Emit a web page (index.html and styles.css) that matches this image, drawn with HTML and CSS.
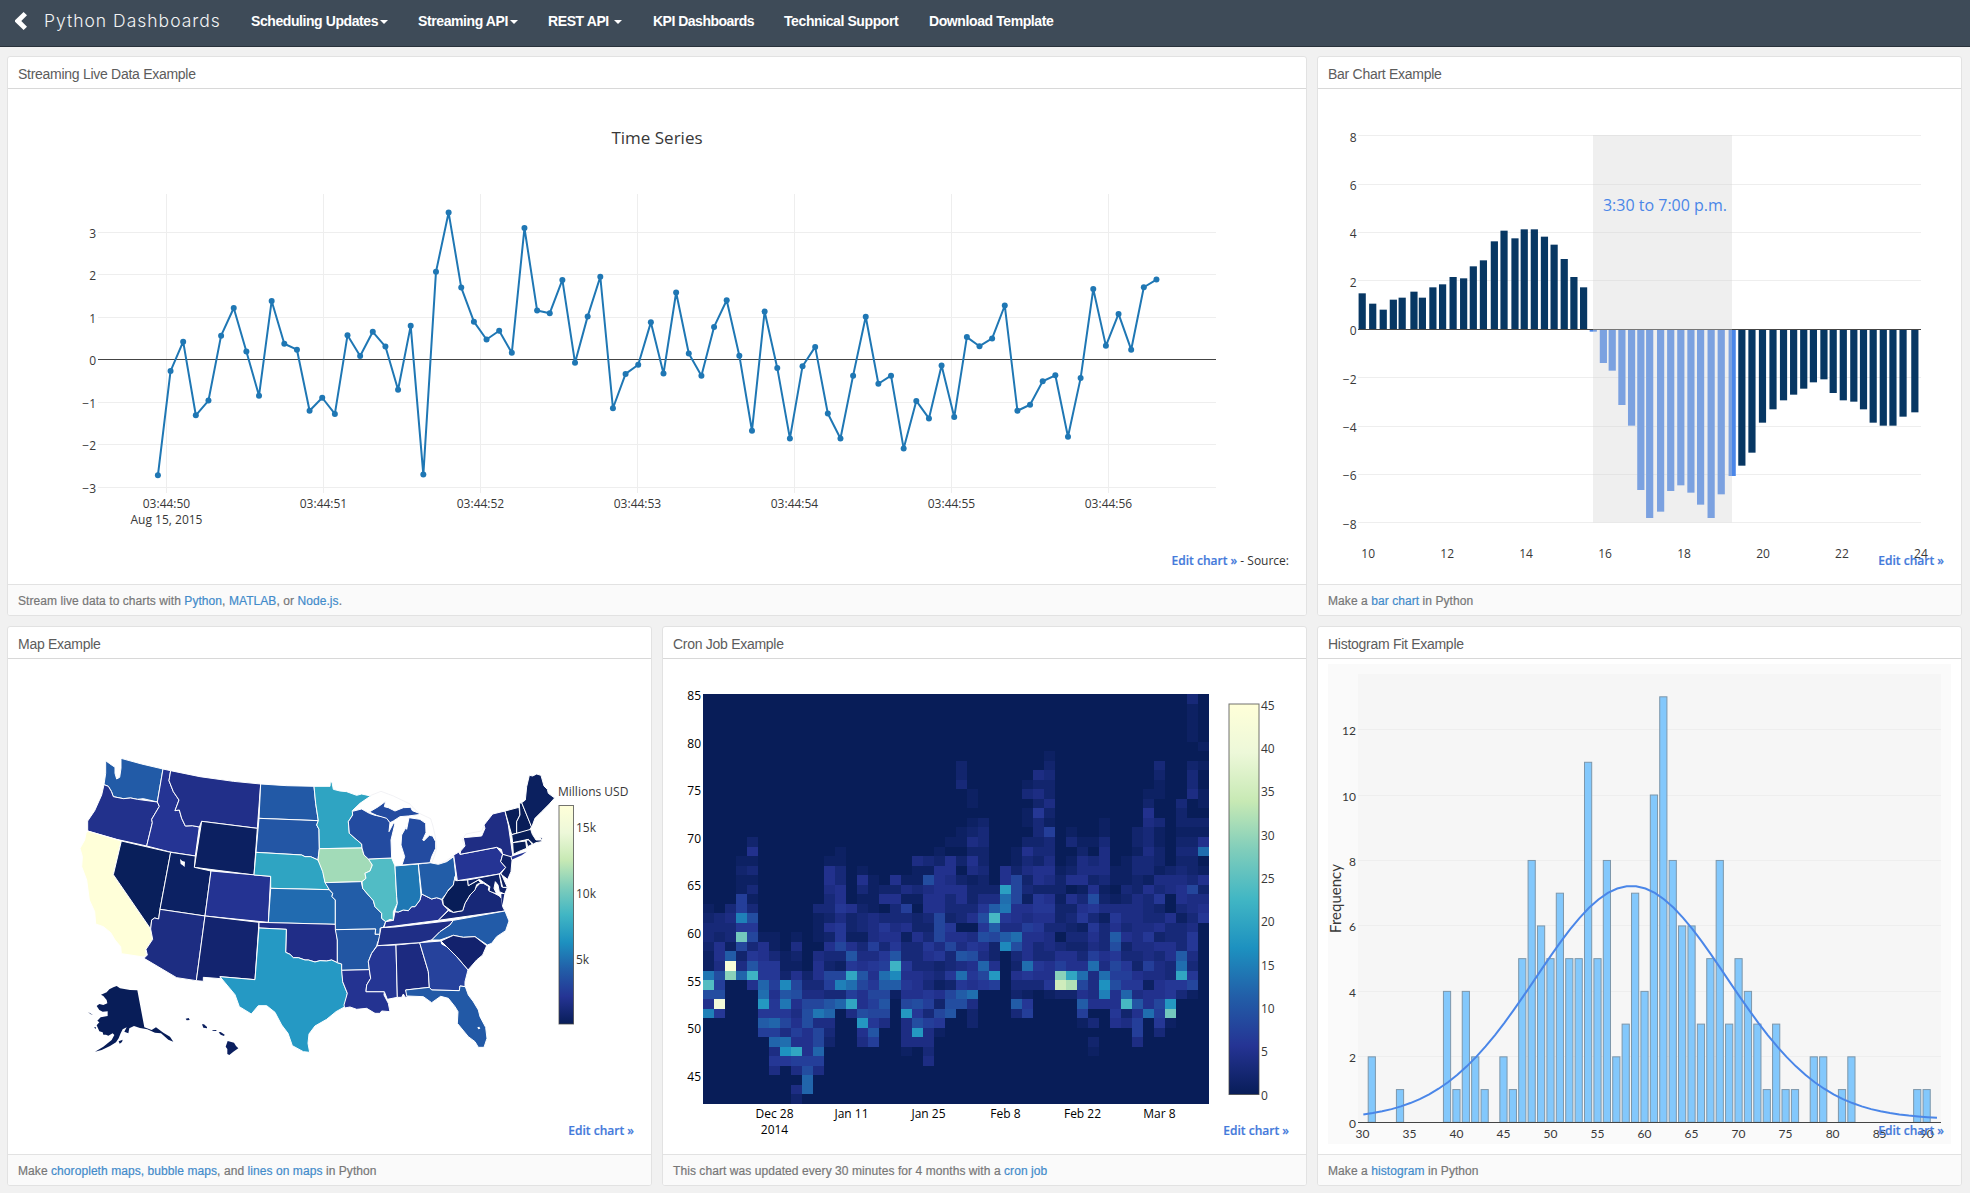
FILE: index.html
```html
<!DOCTYPE html>
<html lang="en">
<head>
<meta charset="utf-8">
<title>Python Dashboards</title>
<link rel="stylesheet" href="styles.css">
</head>
<body>
<header class="navbar">
  <a class="brand" href="#">
    <svg class="chevron" viewBox="0 0 12 18"><path d="M8.6 0 L12 3.3 L6.3 9 L12 14.7 L8.6 18 L0 9.7 V8.3 Z"/></svg>
    <span class="brand-name">Python Dashboards</span>
  </a>
  <nav class="menu">
    <a class="menu-item w-scheduling" href="#">Scheduling Updates<i class="caret"></i></a>
    <a class="menu-item w-streaming" href="#">Streaming API<i class="caret"></i></a>
    <a class="menu-item w-rest" href="#">REST API <i class="caret"></i></a>
    <a class="menu-item w-kpi" href="#">KPI Dashboards</a>
    <a class="menu-item w-support" href="#">Technical Support</a>
    <a class="menu-item" href="#">Download Template</a>
  </nav>
</header>

<main class="grid">
  <section class="card wide">
    <h2 class="card-title">Streaming Live Data Example</h2>
    <div class="card-body">
      <svg class="chart" id="stream" viewBox="8 89 1298 495"></svg>
      <div class="edit"><a href="#">Edit chart »</a> - Source:</div>
    </div>
    <footer class="card-footer">Stream live data to charts with <a href="#">Python</a>, <a href="#">MATLAB</a>, or <a href="#">Node.js</a>.</footer>
  </section>

  <section class="card">
    <h2 class="card-title">Bar Chart Example</h2>
    <div class="card-body">
      <svg class="chart" id="bars" viewBox="1318 89 643 495"></svg>
      <div class="edit"><a href="#">Edit chart »</a></div>
    </div>
    <footer class="card-footer">Make a <a href="#">bar chart</a> in Python</footer>
  </section>

  <section class="card">
    <h2 class="card-title">Map Example</h2>
    <div class="card-body">
      <svg class="chart" id="map" viewBox="8 659 643 495"></svg>
      <div class="edit"><a href="#">Edit chart »</a></div>
    </div>
    <footer class="card-footer">Make <a href="#">choropleth maps,</a> <a href="#">bubble maps</a>, and <a href="#">lines on maps</a> in Python</footer>
  </section>

  <section class="card">
    <h2 class="card-title">Cron Job Example</h2>
    <div class="card-body">
      <svg class="chart" id="heat" viewBox="663 659 643 495"></svg>
      <div class="edit"><a href="#">Edit chart »</a></div>
    </div>
    <footer class="card-footer">This chart was updated every 30 minutes for 4 months with a <a href="#">cron job</a></footer>
  </section>

  <section class="card">
    <h2 class="card-title">Histogram Fit Example</h2>
    <div class="card-body">
      <svg class="chart" id="hist" viewBox="1318 659 643 495"></svg>
      <div class="edit"><a href="#">Edit chart »</a></div>
    </div>
    <footer class="card-footer">Make a <a href="#">histogram</a> in Python</footer>
  </section>
</main>
<script src="charts.js"></script>
</body>
</html>
```
FILE: styles.css
```css
* { box-sizing: border-box; }
body {
  margin: 0;
  background: #f1f1f1;
  font-family: "Liberation Sans", Arial, sans-serif;
  height: 1193px;
  overflow: hidden;
}
a { text-decoration: none; color: #428bca; }

.navbar {
  height: 47px;
  display: flex;
  align-items: center;
  padding: 0 0 5px 15px;
  background: #3e4b58;
  border-bottom: 1px solid #29323b;
}
.brand { display: flex; align-items: center; width: 236px; color: #f2f3f4; }
.chevron { width: 12px; height: 18px; fill: #fff; margin-right: 17px; }
.brand-name {
  font-family: Inter, "Liberation Sans", sans-serif;
  font-size: 17.5px;
  font-weight: 300;
  letter-spacing: 1px;
  white-space: nowrap;
}
.menu { display: flex; }
.menu-item {
  color: #fff;
  font-size: 14px;
  font-weight: bold;
  letter-spacing: -0.4px;
  white-space: nowrap;
}
.w-scheduling { width: 167px; letter-spacing: -0.42px; }
.w-streaming { width: 130px; }
.w-rest { width: 105px; }
.w-kpi { width: 131px; letter-spacing: -0.5px; }
.w-support { width: 145px; }
.caret {
  display: inline-block;
  margin-left: 2px;
  vertical-align: 2px;
  border: 4px solid transparent;
  border-top-color: #fff;
  border-bottom: 0;
}

.grid {
  display: grid;
  grid-template-columns: repeat(3, 645px);
  grid-auto-rows: 560px;
  gap: 10px;
  padding: 9px 7px;
}
.wide { grid-column: span 2; }
.card {
  display: flex;
  flex-direction: column;
  background: #fff;
  border: 1px solid #e2e2e2;
  border-radius: 3px;
  overflow: hidden;
}
.card-title {
  flex: none;
  margin: 0;
  height: 32px;
  padding-left: 10px;
  border-bottom: 1px solid #d8d8d8;
  color: #5c5c5c;
  font-size: 14px;
  font-weight: normal;
  letter-spacing: -0.28px;
  line-height: 34px;
}
.card-body { position: relative; flex: none; height: 495px; }
.chart {
  display: block;
  width: 100%;
  height: 495px;
  font-family: "Open Sans", sans-serif;
  font-size: 12px;
}
.edit {
  position: absolute;
  right: 17px;
  bottom: 14px;
  font-family: "Open Sans", sans-serif;
  font-size: 12px;
  line-height: 18px;
  color: #333;
}
.edit a { color: #447adb; font-weight: 600; -webkit-text-stroke: 0.2px; }
.card-footer {
  flex: none;
  height: 31px;
  padding-left: 10px;
  border-top: 1px solid #e2e2e2;
  background: #fafafa;
  color: #777;
  font-size: 12px;
  letter-spacing: 0.07px;
  line-height: 33px;
  -webkit-text-stroke: 0.2px;
}

.grid-line { stroke: #eee; }
.zero-line { stroke: #444; }
.label { fill: #383838; }
.label-black { fill: #000; }
.end { text-anchor: end; }
.mid { text-anchor: middle; }
.title { font-size: 17px; }
.note { font-size: 16px; fill: #4a86e8; }
.trace { fill: none; stroke: #1f77b4; stroke-width: 2; stroke-linejoin: round; }
.dot { fill: #1f77b4; }
.lato { font-family: Lato, sans-serif; }
.axis-title { font-family: Lato, sans-serif; font-size: 15px; }
.fit { fill: none; stroke: #4a86e8; stroke-width: 2; }
.cell { shape-rendering: crispEdges; }
.state { stroke: #fff; stroke-width: 3; stroke-linejoin: round; }
.island { stroke: none; }
.shore { fill: none; stroke: #ececf0; stroke-width: 2; }
```
FILE: charts.js
```javascript
const NS = 'http://www.w3.org/2000/svg';
function add(parent, tag, attrs, text) {
  const el = document.createElementNS(NS, tag);
  for (const k in attrs) el.setAttribute(k, attrs[k]);
  if (text !== undefined) el.textContent = text;
  parent.appendChild(el);
  return el;
}
const line = (p, x1, y1, x2, y2, c) => add(p, 'line', { x1, y1, x2, y2, class: c });
const label = (p, x, y, t, c) => add(p, 'text', { x, y, class: 'label ' + (c || '') }, t);
const rect = (p, x, y, width, height, fill) => add(p, 'rect', { x, y, width, height, fill });
const minus = v => String(v).replace('-', '\u2212');
const snap = v => Math.floor(v) + 0.5;

/* yellow-green-blue colour scale, low to high */
const SCALE = [[8,29,88],[37,52,148],[34,94,168],[29,145,192],[65,182,196],[127,205,187],[199,233,180],[237,248,217],[255,255,217]];
function ramp(t) {
  const p = Math.min(t * 8, 7.999), i = Math.floor(p), f = p - i;
  return 'rgb(' + SCALE[i].map((c, k) => Math.round(c + (SCALE[i + 1][k] - c) * f)) + ')';
}
function colorbar(svg, id, x, y, w, h) {
  const g = add(svg, 'linearGradient', { id, x1: 0, y1: 1, x2: 0, y2: 0 });
  SCALE.forEach((c, i) => add(g, 'stop', { offset: i / 8, 'stop-color': 'rgb(' + c + ')' }));
  const r = rect(svg, x, y, w, h, 'url(#' + id + ')');
  r.setAttribute('stroke', '#444');
  r.setAttribute('stroke-opacity', '.75');
}

/* time series */
{
  const s = document.getElementById('stream');
  const Y = v => 359.8 - 42.5 * v;
  label(s, 657, 143.5, 'Time Series', 'mid title');
  for (let k = 0; k < 7; k++) {
    const x = snap(166.3 + 157 * k);
    line(s, x, 194, x, 493, 'grid-line');
    label(s, x, 507.5, '03:44:5' + k, 'mid');
  }
  label(s, 166.5, 524, 'Aug 15, 2015', 'mid');
  for (let v = -3; v <= 3; v++) {
    line(s, 98, snap(Y(v)), 1216, snap(Y(v)), v ? 'grid-line' : 'zero-line');
    label(s, 96, Y(v) + 5.5, minus(v), 'end');
  }
  const raw = [1355,1058,974,1184,1142,957,878,1002,1128,858,980,997,1171,1134,1180,956,1015,946,988,1111,929,1353,775,606,820,917,968,943,1006,650,885,893,798,1034,902,789,1164,1066,1040,
    919,1065,834,1008,1071,932,856,1014,1228,888,1049,1250,1044,989,1179,1250,1071,903,1094,1071,1279,1143,1193,1042,1189,961,987,965,871,1171,1154,1087,1070,1245,1078,824,986,895,997,819,797];
  const pts = raw.map((v, i) => [157.9 + i * 12.64, v / 2.851]);
  add(s, 'polyline', { points: pts.join(' '), class: 'trace' });
  pts.forEach(p => add(s, 'circle', { cx: p[0], cy: p[1], r: 3, class: 'dot' }));
}

/* bar chart */
{
  const s = document.getElementById('bars');
  const Y = v => 329.3 - 24.2 * v;
  for (let v = -8; v <= 8; v += 2) {
    if (v) line(s, 1358, snap(Y(v)), 1921, snap(Y(v)), 'grid-line');
    label(s, 1356.5, Y(v) + 5.8, minus(v), 'end');
  }
  const xs = [124,149,174,198,219,247,267,292,315,340,365,388,412,438,461,487,509,533,557,580,604,627,650,673,697,718,741,764,786,807,833,857,881,905,928,953,977,1003,1026,1050,1075,1100,1125,1149,1173,1196,1221,1243,1267,1292,1315,1338,1362,1385,1409,1437];
  const ends = [880,911,929,899,893,875,893,862,853,831,835,799,781,724,692,715,688,688,710,734,777,831,862,
    995,1089,1112,1215,1277,1470,1554,1535,1473,1456,1478,1514,1554,1483,1428,
    1397,1358,1268,1228,1201,1184,1166,1147,1138,1179,1201,1205,1228,1268,1277,1277,1250,1237];
  xs.forEach((x, i) => {
    const y = ends[i] / 3, top = Math.min(y, 329.3), h = Math.abs(y - 329.3);
    rect(s, x / 2.3758 + 1310 - 3.6, top, 7.2, h, i > 22 && i < 38 ? '#4a86e8' : '#073763');
  });
  line(s, 1358, 329.5, 1921, 329.5, 'zero-line');
  rect(s, 1593, 135, 139, 387.5, 'rgba(211,211,211,.36)');
  label(s, 1665, 210.5, '3:30 to 7:00 p.m.', 'mid note');
  for (let k = 0; k < 8; k++) label(s, 1368.2 + 78.96 * k, 558, 10 + 2 * k, 'mid');
}

/* choropleth map */
{
  const s = document.getElementById('map');
  const west = add(s, 'g', { transform: 'translate(60 740) scale(.33333)' });
  const east = add(s, 'g', { transform: 'translate(340 740) scale(.33333)' });
  const st = (g, fill, d, c) => add(g, 'path', { d: 'M' + d + 'Z', fill, class: c || 'state' });
  st(west, '#225ba7', '137,62 149,71 165,82 165,100 170,117 179,112 183,85 183,55 245,72 309,87 292,186 250,176 232,178 212,174 190,176 160,170 154,154 145,139 132,134 137,100');
  st(west, '#22318c', '132,134 145,139 154,154 160,170 190,176 212,174 232,178 292,186 298,199 275,238 277,248 260,318 170,298 83,273 83,243 104,212 125,165');
  st(west, '#253494', '309,87 332,92 327,122 340,155 357,180 345,212 358,210 365,235 376,258 397,257 418,261 406,348 330,336 260,318 277,248 275,238 298,199 292,186');
  st(west, '#212f89', '332,92 420,110 520,124 602,132 592,265 425,244 418,261 397,257 376,258 365,235 358,210 345,212 357,180 340,155 327,122');
  st(west, '#0c2061', '425,244 592,265 582,405 403,382');
  st(west, '#ffffd9', '83,273 184,303 160,404 272,567 278,598 262,624 257,630 260,648 250,651 184,641 182,620 165,600 152,578 130,560 107,552 104,515 88,480 84,450 80,420 65,380 67,350 60,325 74,300 78,280');
  st(west, '#091f5b', '184,303 332,337 300,508 296,537 284,534 275,540 272,567 160,404');
  st(west, '#0c2163', '332,337 406,348 403,382 453,393 435,528 300,508');
  st(west, '#fff', '360,357 367,363 375,365 374,381 367,375 362,372', 'island');
  st(west, '#243392', '453,393 632,409 625,547 435,528');
  st(west, '#1d2d82', '300,508 435,528 409,722 350,713 252,655 262,645 258,628 278,598 272,567 275,540 284,534 296,537');
  st(west, '#13246f', '435,528 597,547 585,719 480,710 482,716 430,712 430,724 409,722');
  st(west, '#2259a6', '602,132 680,137 762,139 767,190 775,242 597,235');
  st(west, '#2356a5', '597,235 775,242 770,255 777,268 778,326 774,360 752,350 735,350 725,345 588,337');
  st(west, '#2fa4c2', '588,337 725,345 735,350 752,350 774,360 788,385 795,425 808,449 632,445 632,409 582,405');
  st(west, '#216bb0', '632,445 808,449 818,460 816,470 826,480 826,553 625,548');
  st(west, '#202d87', '597,547 826,553 832,600 832,668 815,660 800,663 780,662 765,666 745,660 735,660 715,653 700,653 690,643 677,637 679,568 597,564');
  st(west, '#2599c4', '597,564 679,568 677,637 690,643 700,653 715,653 735,660 745,660 765,666 780,662 800,663 815,660 832,668 845,672 848,725 862,760 855,800 828,815 800,838 765,858 747,882 744,910 749,937 730,935 697,917 684,880 665,855 645,817 620,797 595,797 574,822 538,800 525,764 480,710 585,719');
  st(west, '#081d58', '232,751 253,862 275,870 288,862 310,878 330,890 340,905 325,899 303,880 285,878 262,868 240,864 222,858 208,865 205,880 193,875 200,862 188,868 182,880 176,895 168,907 150,918 125,930 105,935 130,920 155,900 163,885 158,880 145,887 138,884 130,884 128,877 118,874 110,856 118,847 112,842 122,832 143,828 143,814 128,815 118,810 110,798 118,792 130,795 142,790 140,780 130,768 123,764 140,757 148,748 160,742 170,738 180,745 210,750', 'island');
  st(west, '#081d58', '176,904 188,899 186,906 179,911', 'island');
  st(west, '#081d58', '84,816 93,821 99,825 91,822', 'island');
  st(west, '#081d58', '102,862 108,862 107,867', 'island');
  ['377,836 386,834 389,840 380,841', '426,853 432,853 441,861 441,865 430,863', '457,870 470,870 468,873 458,872', '476,877 482,876 494,884 492,888 482,884', '503,903 522,908 528,918 535,925 520,935 508,945 502,942 502,927 497,920'].forEach(d => st(west, '#0b1f5f', d, 'island'));

  add(east, 'path', { d: 'M88,168 L123,154 160,168 210,192 216,200 238,220 272,236 278,255 286,290 290,325 284,345 276,367', class: 'shore' });
  add(east, 'path', { d: 'M270,370 L295,373 320,362 343,345 358,335 375,318 366,300 378,282 425,273 433,255', class: 'shore' });
  st(east, '#2fa4c2', '-78,139 -30,139 -29,125 -24,127 -20,148 0,153 20,155 50,166 65,162 92,168 60,190 37,212 38,225 25,245 28,280 45,295 65,312 66,324 -62,326 -63,268 -70,255 -65,242 -73,190');
  st(east, '#a2dbb8', '-62,326 66,324 72,345 85,355 97,375 90,393 75,400 78,415 66,425 -45,428 -52,395 -66,360');
  st(east, '#225da8', '-45,428 64,425 68,445 85,465 100,482 105,500 125,520 125,535 137,545 130,562 120,565 120,583 105,583 107,567 -14,569 -14,480 -24,470 -22,460 -32,449');
  st(east, '#2256a3', '-14,569 107,567 105,583 123,583 112,610 110,618 95,640 85,665 88,689 5,691 5,672 -8,668 -8,600');
  st(east, '#243391', '5,691 88,689 92,715 80,735 78,755 133,755 132,765 145,790 150,815 125,813 120,820 105,820 80,805 50,808 30,801 14,804 12,795 22,760 8,725');
  st(east, '#253694', '112,617 168,615 172,772 142,778 133,755 78,755 80,735 92,715 88,689 85,665 95,640');
  st(east, '#1c2a80', '168,615 239,608 265,695 268,742 197,750 203,770 196,772 190,762 185,772 172,772');
  st(east, '#1f2e86', '123,563 165,561 340,541 330,555 300,575 275,600 239,608 112,617 118,590');
  st(east, '#243391', '137,545 160,541 165,515 175,516 190,510 205,512 215,500 225,500 240,480 245,462 275,477 290,473 305,478 310,495 325,510 295,541 165,558 132,562');
  st(east, '#51bcc5', '85,357 155,354 165,378 170,470 172,490 160,515 160,541 150,538 137,545 125,535 125,520 105,500 100,482 85,465 68,445 66,425 78,415 75,400 90,393 97,375');
  st(east, '#1f78b4', '165,378 235,372 243,465 240,480 225,500 215,500 205,512 190,510 175,516 165,515 172,490 170,470');
  st(east, '#225da8', '235,372 270,368 295,373 320,365 341,350 347,405 340,435 325,450 320,460 305,478 290,473 275,477 245,462');
  st(east, '#234ba0', '37,214 65,207 88,220 105,226 140,232 150,248 147,275 160,250 165,250 153,300 155,354 85,357 72,345 66,324 65,312 45,295 28,280 25,245 38,225');
  st(east, '#234ba0', '88,216 115,200 137,184 133,200 145,203 165,213 190,203 212,202 217,212 238,220 235,224 205,228 180,230 160,243 150,248 140,235 110,226');
  st(east, '#234ba0', '207,233 240,238 257,250 258,278 248,300 252,302 268,286 278,288 287,305 287,325 275,350 270,368 186,375 194,350 183,315 185,285 198,262 200,268');
  st(east, '#172878', '420,430 430,430 447,440 445,450 478,468 484,475 488,500 495,513 295,541 325,512 340,517 368,512 375,490 390,465 410,440');
  st(east, '#081d58', '347,422 383,420 385,437 415,420 422,428 410,434 405,450 390,465 375,490 368,512 340,517 310,495 308,478 322,455 340,435 345,410');
  st(east, '#225ba8', '340,541 495,513 507,543 497,572 470,590 455,610 442,615 405,590 370,592 340,586 300,600 275,600 300,575 330,555');
  st(east, '#13226d', '303,603 340,586 370,592 405,590 440,617 428,645 410,660 384,690 350,650 320,620');
  st(east, '#26429c', '239,608 303,603 305,612 320,620 350,650 384,690 375,725 375,740 360,738 358,752 275,750 268,742 265,695');
  st(east, '#2259a6', '197,750 268,742 275,750 358,752 360,738 376,740 385,765 400,785 415,810 420,830 437,862 441,895 432,922 415,922 405,905 385,890 352,850 354,815 345,800 325,775 302,769 275,788 250,770 200,768');
  st(east, '#fff', '412,862 418,860 421,866 415,868', 'island');
  st(east, '#253494', '341,345 357,336 360,343 470,322 488,343 482,365 497,382 478,402 352,422');
  st(east, '#1f2d84', '360,343 362,333 375,318 370,293 425,288 435,265 432,255 458,222 495,213 505,255 518,345 512,352 488,343 484,328 470,322');
  st(east, '#253494', '514,350 530,345 560,335 545,346 518,358 508,364', 'island');
  st(east, '#0f2166', '488,343 513,350 516,362 513,395 503,418 482,402 497,382 482,365');
  st(east, '#0f2268', '383,420 478,402 485,440 502,444 494,462 478,455 474,435 466,425 462,445 470,462 447,453 450,440 430,426 418,418 385,437');
  st(east, '#0d2062', '478,402 484,402 502,442 488,442');
  st(east, '#172878', '484,462 493,462 489,485 485,500', 'island');
  st(east, '#081d58', '495,213 537,202 540,225 530,245 530,280 515,284');
  st(east, '#081d58', '538,190 545,188 575,260 565,275 530,280 530,245 540,225');
  st(east, '#0b205f', '545,188 556,180 560,140 568,106 578,108 590,102 603,106 612,138 622,148 625,160 644,174 628,192 605,215 585,235 575,262');
  st(east, '#081d58', '515,284 572,268 577,283 588,300 604,300 599,291 607,294 604,305 588,308 580,312 565,298 518,308');
  st(east, '#081d58', '518,308 557,303 560,325 535,335 520,343');
  st(east, '#081d58', '558,300 566,300 577,313 563,320');

  colorbar(s, 'usd', 559, 805.5, 14.5, 218.5);
  label(s, 558, 796, 'Millions USD');
  label(s, 576, 832, '15k');
  label(s, 576, 898, '10k');
  label(s, 576, 964, '5k');
}

/* heat map: one entry per column, [first row, values in base 46] */
{
  const s = document.getElementById('heat');
  const digits = '0123456789abcdefghijklmnopqrstuvwxyzABCDEFGHIJ';
  const cols = [
    [22,'1233211eo95f'],[23,'332554979F6'],[22,'34331bHt'],[17,'121177f6r824c'],[15,'2513131396836am5'],[25,'15566cdi6b7'],
    [25,'113667566c7c464'],[27,'112gae684dh6'],[25,'142158954575k74042'],[29,'23489955579cc'],[22,'31110455348e488c74'],
    [17,'155433252532873ac432'],[16,'11335564668318f3c'],[22,'52215a6kd7k4'],[18,'15312331345a8559i54'],[19,'1111444746568786a7'],
    [20,'250365367db8a84'],[19,'52533456amgb1'],[19,'14173513365658i4441'],[17,'411310225333555969i4'],[17,'3194553236534367374434'],
    [16,'12555558884623152861'],[15,'105545332658336289a'],[7,'22300001102025533054a4d6b9'],[10,'110124254122350469565d422'],
    [13,'233223224696954c86'],[20,'24bnb8225i7'],[18,'55jde64bg'],[16,'112888554d932532b3'],[9,'1301102534231547555d63167'],
    [8,'42426332325526656533653'],[6,'12322421733454256534435561'],[18,'12212230357tz2'],[14,'130125052323255kw2'],
    [15,'12445135613235d85b71'],[15,'1034259636547d444503021'],[13,'1134443124133354dhf5'],[18,'1101465b968795565'],
    [17,'11132443523676cn24'],[14,'22133224444443256' + '4a5774'],[10,'125433433153334644741' + '55d'],
    [7,'32110031122143623525344558763'],[18,'24400533553366ir1'],[11,'3221232345531333bdk63'],
    [0,'31111002334002123223844346643681'],[5,'1010011021' + '5d0152456']
  ];
  rect(s, 703, 694, 506, 410, ramp(0));
  const edge = r => Math.round(694 + r * 410 / 43);
  cols.forEach(([r0, vals], c) => [...vals].forEach((ch, k) => {
    const v = digits.indexOf(ch), r = r0 + k;
    if (v > 0) rect(s, 703 + 11 * c, edge(r), 11, edge(r + 1) - edge(r), ramp(v / 45)).setAttribute('class', 'cell');
  }));
  for (let k = 0; k < 9; k++) label(s, 701, 700 + 47.6 * k, 85 - 5 * k, 'end label-black');
  ['Dec 28', 'Jan 11', 'Jan 25', 'Feb 8', 'Feb 22', 'Mar 8'].forEach((t, k) => label(s, 774.5 + 77 * k, 1118, t, 'mid label-black'));
  label(s, 774.5, 1134, '2014', 'mid label-black');
  colorbar(s, 'count', 1229, 704, 30, 390.5);
  for (let k = 0; k < 10; k++) label(s, 1261, 1099.5 - 43.3 * k, 5 * k);
}

/* histogram with fitted curve */
{
  const s = document.getElementById('hist');
  const X = v => 1362.4 + 9.404 * (v - 30), Y = v => 1122.3 - 32.73 * v;
  rect(s, 1328, 664, 623, 480, '#fafafa');
  rect(s, 1358, 674, 583, 448, '#f6f6f6');
  for (let v = 0; v <= 12; v += 2) {
    if (v) line(s, 1358, snap(Y(v)), 1941, snap(Y(v)), 'grid-line');
    label(s, 1356, Y(v) + 5.5, v, 'end lato');
  }
  const n = {31:2,34:1,39:4,40:1,41:4,42:2,43:1,45:2,46:1,47:5,48:8,49:6,50:5,51:7,52:5,53:5,54:11,55:5,56:8,57:2,58:3,59:7,60:4,61:10,62:13,63:8,64:6,65:6,66:3,67:5,68:8,69:3,70:5,71:4,72:3,73:1,74:3,75:1,76:1,78:2,79:2,81:1,82:2,89:1,90:1};
  for (const v in n) {
    const b = rect(s, X(v) - 3.6, Y(n[v]), 7.2, 32.73 * n[v], '#83c8fc');
    b.setAttribute('stroke', '#7d97ab');
  }
  line(s, 1358, 1122.5, 1941, 1122.5, 'zero-line');
  const pts = [];
  for (let v = 30.1; v <= 91.1; v += 1) pts.push([X(v), Y(0.1 + 7.12 * Math.exp(-((v - 58.6) ** 2) / 206))]);
  add(s, 'polyline', { points: pts.join(' '), class: 'fit' });
  for (let v = 30; v <= 90; v += 5) label(s, X(v), 1138, v, 'mid lato');
  add(s, 'text', { transform: 'translate(1341 898.5) rotate(-90)', class: 'label mid axis-title' }, 'Frequency');
}
```
